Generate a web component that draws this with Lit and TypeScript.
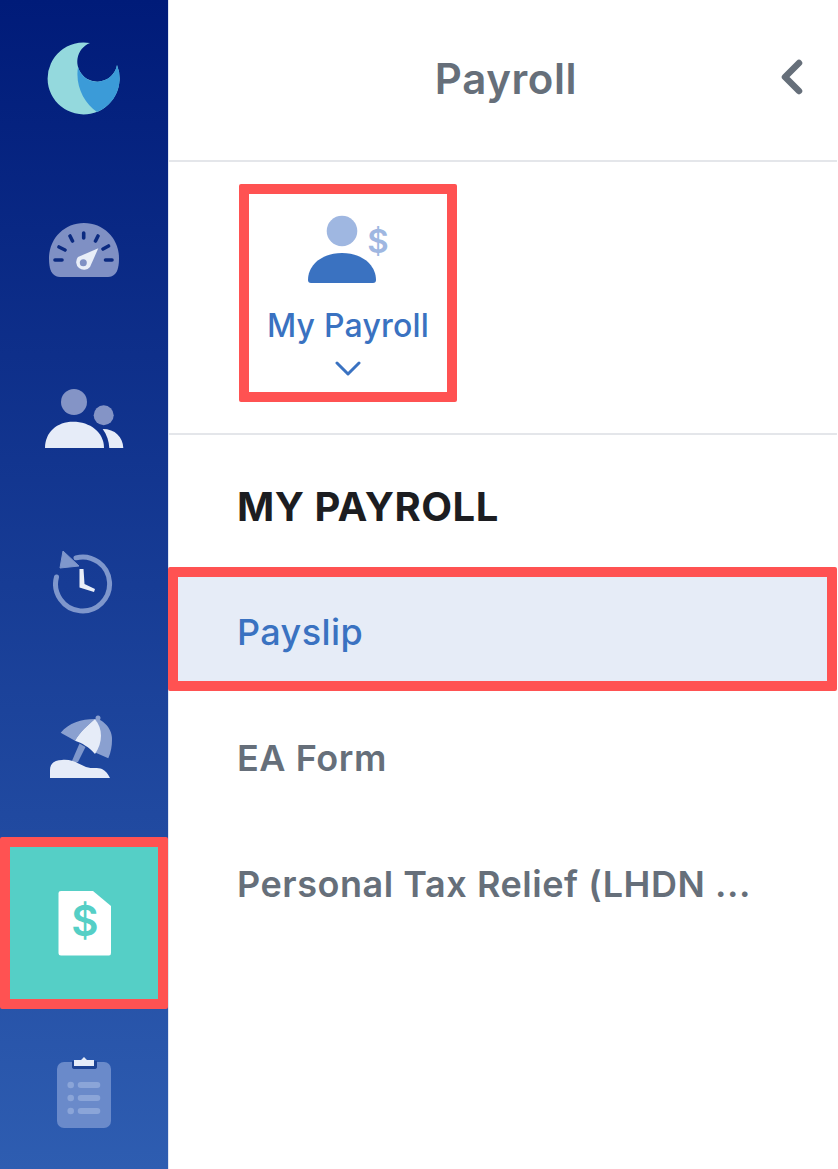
import { LitElement, html, css, svg } from "lit";
import { customElement } from "lit/decorators.js";

const icons = {
  logo: svg`<svg width="76" height="74" viewBox="0 0 76 74"><path d="M44 2A36 36 0 1 0 71 24A20 20 0 1 1 44 2Z" fill="#94d9dd"/><path d="M32 26A20 20 0 0 0 71 24A36 36 0 0 1 51 71C38 62 29 45 32 26Z" fill="#3b9bd8"/></svg>`,
  gauge: svg`<svg width="74" height="58" viewBox="0 0 74 58"><path d="M37 2C17 2 2 18 2 37C2 44 3 50 6 53C8 55 10 56 13 56H61C64 56 66 55 68 53C71 50 72 44 72 37C72 18 57 2 37 2Z" fill="#7f90c4"/><g stroke="#0b2a80" stroke-width="3.600" stroke-linecap="round"><path d="M36.700 12V17M23 15L25.500 20M51 15L48.500 20M12 26L18 29M61.500 25L56 28M8 39H15M58.500 39H65"/></g><path d="M51.300 27.300L43 46A7.500 7.500 0 1 1 31 36Z" fill="#e9eef8"/><circle cx="36.300" cy="41.700" r="3.500" fill="#7f90c4"/></svg>`,
  people: svg`<svg width="80" height="62" viewBox="0 0 80 62"><circle cx="30" cy="14" r="13" fill="#8494c6"/><circle cx="59.700" cy="27.300" r="10" fill="#8494c6"/><path d="M1 60C1 44 13 33.700 29 33.700C46 33.700 60 44 60 60Z" fill="#e6ecf8"/><path d="M58.700 41C71 41 79 49 79.300 60H65.300C65 53 63 47 58.700 41Z" fill="#e6ecf8"/></svg>`,
  history: svg`<svg width="62" height="64" viewBox="0 0 62 64"><path d="M3.500 26A27 27 0 1 0 23 6.800" fill="none" stroke="#7f97cc" stroke-width="5" stroke-linecap="round"/><path d="M10 0L7 17L26 15Z" fill="#7f97cc" stroke="#7f97cc" stroke-width="1" stroke-linejoin="round"/><path d="M26.500 18H30.500L31.500 33L42 38L41 41L26.500 36.500Z" fill="#e9eef8"/></svg>`,
  beach: svg`<svg width="68" height="64" viewBox="-2 0 68 64"><path d="M27.500 29.500L33.500 33L26 48H19.500Z" fill="#7f97cc"/><path d="M8.700 18.700C17 9 29 5 43 5C36 11 28 18 23 26.700Z" fill="#8aa0d0"/><path d="M43 5C50 4 61 15 60 26C60 32 59 38 56.300 44.300L42 38C47 27 49 15 43 5Z" fill="#8aa0d0"/><circle cx="46" cy="4" r="2.500" fill="#8aa0d0"/><path d="M23 26.700C28 18 36 11 43 5C51 15 51 28 43 40C37 33 30 29 23 26.700Z" fill="#e6ecf8"/><path d="M-2 64V56C-2 49 3 46 10 46C20 45 27 50 34 53C40 55 46 53 50 55C54 57 56 60 58 64Z" fill="#e6ecf8"/></svg>`,
  slip: svg`<svg width="54" height="66" viewBox="-1 0 54 66"><path d="M3 1H35L53 16V63Q53 65.500 51 65.500H3Q0.500 65.500 0.500 63V3Q0.500 1 3 1Z" fill="#fff"/><text x="27" y="46" text-anchor="middle" class="slip-dollar">$</text></svg>`,
  clip: svg`<svg width="54" height="74" viewBox="0 0 54 74"><rect y="5" width="54" height="66" rx="7" fill="#6a8aca"/><path d="M15 4H40V10Q40 12 37 12H18Q15 12 15 10Z" fill="#1d4394"/><path d="M17 3H24L27 0L30 3H37V9H17Z" fill="#e6ecf8"/><g fill="#8ba5d8"><circle cx="13.700" cy="28" r="3.300"/><circle cx="13.700" cy="41" r="3.300"/><circle cx="13.700" cy="54" r="3.300"/><rect x="20.700" y="25" width="22.600" height="6" rx="3"/><rect x="20.700" y="38" width="22.600" height="6" rx="3"/><rect x="20.700" y="51" width="22.600" height="6" rx="3"/></g></svg>`,
  me: svg`<svg width="84" height="70" viewBox="0 0 84 70"><circle cx="36" cy="16" r="15.300" fill="#9fb7e1"/><path d="M2 65C2 50 16 38 36 38C56 38 70 50 70 65Q70 68 67 68H5Q2 68 2 65Z" fill="#3a72c1"/><text x="72" y="38" text-anchor="middle" class="me-dollar">$</text></svg>`,
};

@customElement("app-root")
export class AppRoot extends LitElement {
  static styles = css`
    :host { display: block; width: 838px; height: 1169px; overflow: hidden; font-family: Inter, "Noto Sans", sans-serif; background: #fff; }
    .page { display: flex; height: 1169px; }
    .rail { width: 168px; flex: none; background: linear-gradient(180deg, #001b79 0%, #2e5db1 100%); display: grid; grid-template-rows: 156px 188px 150px 178px 148px 17px 172px 160px; }
    .cell { display: flex; align-items: center; justify-content: center; }
    .cell.active { grid-row: 7; background: #55cfc6; border: 10px solid #ff5252; box-sizing: border-box; border-radius: 2px; }
    .cell.last { grid-row: 8; align-items: flex-start; padding-top: 48px; }
    .slip-dollar { font: 600 42px Inter, sans-serif; fill: #55cfc6; }
    .me-dollar { font: 600 33px Inter, sans-serif; fill: #9fb7e1; }
    .main { flex: none; width: 669px; box-sizing: border-box; border-left: 1px solid #dfe5f3; }
    .head { height: 162px; box-sizing: border-box; border-bottom: 2px solid #e4e6ea; display: flex; align-items: center; justify-content: center; position: relative; color: #666f7a; font-size: 42px; font-weight: 600; letter-spacing: .6px; padding: 0 0 4px 6px; }
    .head svg { position: absolute; right: 33px; top: 59px; }
    .tile-row { height: 273px; box-sizing: border-box; border-bottom: 2px solid #e4e6ea; padding: 22px 0 0 70px; }
    .tile { width: 218px; height: 218px; box-sizing: border-box; border: 10px solid #ff5252; border-radius: 2px; display: flex; flex-direction: column; align-items: center; color: #3a72c1; font-size: 32px; font-weight: 500; letter-spacing: .2px; padding-top: 21px; }
    .tile .label { line-height: 40px; margin-top: 21px; }
    .tile .chev { margin-top: 15px; }
    .title { margin: 0; padding: 48px 0 0 68px; height: 132px; box-sizing: border-box; font-size: 40px; font-weight: 700; line-height: 48px; color: #1c1d21; letter-spacing: .5px; }
    .item { height: 126px; box-sizing: border-box; padding-left: 68px; display: flex; align-items: center; font-size: 36px; font-weight: 600; color: #666f7a; white-space: nowrap; letter-spacing: .55px; }
    .item.on { height: 124px; margin-left: -1px; background: #e6ecf7; color: #3a72c1; border: 10px solid #ff5252; padding: 6px 0 0 59px; border-radius: 2px; font-weight: 500; letter-spacing: .4px; }
    .gap { height: 4px; }
  `;
  render() {
    return html`<div class="page">
      <nav class="rail">
        <div class="cell">${icons.logo}</div>
        <div class="cell">${icons.gauge}</div>
        <div class="cell">${icons.people}</div>
        <div class="cell">${icons.history}</div>
        <div class="cell">${icons.beach}</div>
        <div class="cell active">${icons.slip}</div>
        <div class="cell last">${icons.clip}</div>
      </nav>
      <section class="main">
        <header class="head">Payroll
          <svg width="24" height="36" viewBox="0 0 24 36"><path d="M19 4L5 18L19 32" fill="none" stroke="#666f7a" stroke-width="6.500" stroke-linecap="round" stroke-linejoin="round"/></svg>
        </header>
        <div class="tile-row">
          <div class="tile">
            ${icons.me}
            <div class="label">My Payroll</div>
            <svg class="chev" width="26" height="16" viewBox="0 0 26 16"><path d="M2 2L13 13L24 2" fill="none" stroke="#3a72c1" stroke-width="3" stroke-linecap="round" stroke-linejoin="round"/></svg>
          </div>
        </div>
        <h2 class="title">MY PAYROLL</h2>
        <div class="item on">Payslip</div>
        <div class="gap"></div>
        <div class="item">EA Form</div>
        <div class="item">Personal Tax Relief (LHDN ...</div>
      </section>
    </div>`;
  }
}
